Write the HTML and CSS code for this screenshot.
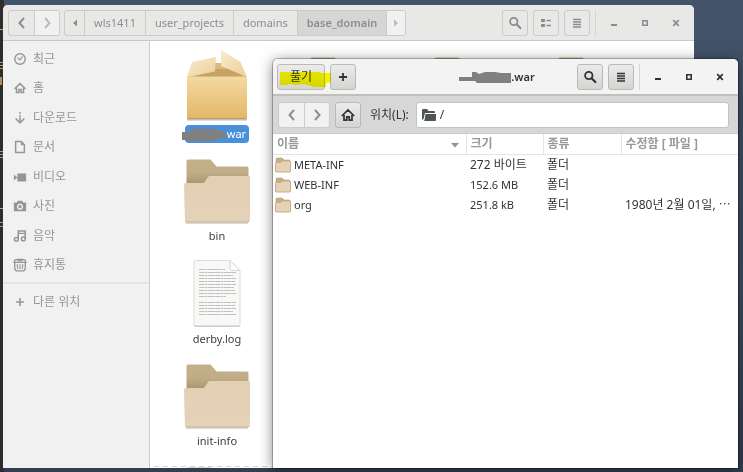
FILE: index.html
```html
<!DOCTYPE html>
<html lang="ko">
  <head>
    <meta charset="UTF-8" />
    <meta name="viewport" content="width=device-width, initial-scale=1.0" />
    <title>base_domain</title>
    <link rel="stylesheet" href="styles.css">
  </head>
  <body>
    <!-- shared icons -->
    <svg class="defs" width="0" height="0">
      <defs>
        <linearGradient id="g-back" x1="0" y1="0" x2="0" y2="1">
          <stop offset="0" stop-color="#c4b18b" />
          <stop offset="0.35" stop-color="#c0ad87" />
          <stop offset="0.65" stop-color="#a8946f" />
        </linearGradient>
        <linearGradient id="g-front" x1="0" y1="0" x2="0" y2="1">
          <stop offset="0" stop-color="#e3cfb3" />
          <stop offset="1" stop-color="#e4d2b9" />
        </linearGradient>
        <linearGradient id="g-box" x1="0" y1="0" x2="0" y2="1">
          <stop offset="0" stop-color="#f3d9a2" />
          <stop offset="1" stop-color="#e3b868" />
        </linearGradient>
        <linearGradient id="g-flap" x1="0" y1="0" x2="1" y2="1">
          <stop offset="0" stop-color="#f8ead0" />
          <stop offset="1" stop-color="#edcf98" />
        </linearGradient>
      </defs>
      <symbol id="folder" viewBox="0 0 66 65">
        <path d="M2 63h62v2H2z" fill="#000" opacity="0.15" />
        <path d="M2.500 2a1.500 1.500 0 0 1 1.500-1.500h22.500l6 7H63a1.500 1.500 0 0 1 1.500 1.500v30h-62z" fill="url(#g-back)" />
        <path d="M.5 25.500a1.500 1.500 0 0 1 1.500-1.500h18l5-7h39.500a1.500 1.500 0 0 1 1.500 1.500l-.5 43a2 2 0 0 1-2 2H3a2 2 0 0 1-2-2z" fill="#c9b18d" />
        <path d="M.5 25.500a1.500 1.500 0 0 1 1.500-1.500h18l5-7h39.500a1.500 1.500 0 0 1 1.500 1.500l-.5 42a2 2 0 0 1-2 2H3a2 2 0 0 1-2-2z" fill="url(#g-front)" />
      </symbol>
      <symbol id="folder-small" viewBox="0 0 16 16">
        <path d="M1 2q0-1 1-1h5l2 2h5q1 0 1 1v6H1z" fill="#c3ae88" stroke="#b8a27b" stroke-width=".6" />
        <path d="M.5 6.500q0-1 1-1h4l2-1.500h7q1 0 1 1V14q0 1-1 1h-13q-1 0-1-1z" fill="#e5d2b7" stroke="#c6ad88" />
      </symbol>
      <symbol id="prev" viewBox="0 0 16 16"><path d="M10 3 5.500 8l4.500 5" fill="none" stroke="currentColor" stroke-width="2" /></symbol>
      <symbol id="next" viewBox="0 0 16 16"><path d="M6 3l4.500 5L6 13" fill="none" stroke="currentColor" stroke-width="2" /></symbol>
      <symbol id="search" viewBox="0 0 16 16">
        <circle cx="6.800" cy="6.500" r="3.700" fill="none" stroke="currentColor" stroke-width="1.800" />
        <path d="M9.600 9.300l3.700 3.700" stroke="currentColor" stroke-width="2.200" stroke-linecap="round" />
      </symbol>
      <symbol id="menu" viewBox="0 0 16 16"><path d="M4 4.500h8M4 7h8M4 9.500h8M4 12h8" stroke="currentColor" stroke-width="1.300" /></symbol>
      <symbol id="list" viewBox="0 0 16 16"><path d="M3 4h4v3H3zM3 9h4v3H3zM8.500 4.700h4.500v1.600H8.500zM8.500 9.700h4.500v1.600H8.500z" fill="currentColor" /></symbol>
      <symbol id="minimize" viewBox="0 0 16 16"><path d="M5 9h6v2H5z" fill="currentColor" /></symbol>
      <symbol id="maximize" viewBox="0 0 16 16"><path d="M5.800 5.800h4.400v4.400H5.800z" fill="none" stroke="currentColor" stroke-width="1.600" /></symbol>
      <symbol id="close" viewBox="0 0 16 16"><path d="M5.200 5.200l5.600 5.600M10.800 5.200l-5.600 5.600" stroke="currentColor" stroke-width="1.800" /></symbol>
      <symbol id="home" viewBox="0 0 16 16">
        <path d="M1.800 9L8 3l6.200 6M4 8v5.200h2.800V9.800h2.400v3.400H12V8" fill="none" stroke="currentColor" stroke-width="1.700" />
      </symbol>
    </svg>

    <div class="terminal-edge"></div>

    <div class="window files">
      <header class="titlebar">
        <div class="group">
          <button type="button" aria-label="뒤로"><svg><use href="#prev" /></svg></button>
          <button type="button" class="dim" aria-label="앞으로"><svg><use href="#next" /></svg></button>
        </div>
        <nav class="group path">
          <button type="button" class="arrow" aria-label="왼쪽"><svg viewBox="0 0 16 16"><path d="M10 4.500v7L6 8z" fill="currentColor" /></svg></button>
          <button type="button">wls1411</button>
          <button type="button">user_projects</button>
          <button type="button">domains</button>
          <button type="button" class="active">base_domain</button>
          <button type="button" class="arrow dim" aria-label="오른쪽"><svg viewBox="0 0 16 16"><path d="M6 4.500v7l4-3.500z" fill="currentColor" /></svg></button>
        </nav>
        <div class="controls">
          <button type="button" aria-label="검색"><svg><use href="#search" /></svg></button>
          <button type="button" aria-label="보기"><svg><use href="#list" /></svg></button>
          <button type="button" aria-label="메뉴"><svg><use href="#menu" /></svg></button>
          <span class="separator"></span>
          <button type="button" class="flat" aria-label="최소화"><svg><use href="#minimize" /></svg></button>
          <button type="button" class="flat" aria-label="최대화"><svg><use href="#maximize" /></svg></button>
          <button type="button" class="flat" aria-label="닫기"><svg><use href="#close" /></svg></button>
        </div>
      </header>

      <div class="content">
        <aside class="sidebar">
          <div class="places">
            <a href="#"><svg viewBox="0 0 16 16"><circle cx="8" cy="8" r="6" fill="none" stroke="currentColor" stroke-width="1.600" /><path d="M5 6.500l3 2.500 3-4" fill="none" stroke="currentColor" stroke-width="1.200" /></svg>최근</a>
            <a href="#"><svg><use href="#home" /></svg>홈</a>
            <a href="#"><svg viewBox="0 0 16 16"><path d="M8 1v2M8 4.500v2M8 7v5" stroke="currentColor" stroke-width="1.800" /><path d="M3 8.500l5 5 5-5" fill="none" stroke="currentColor" stroke-width="1.800" /></svg>다운로드</a>
            <a href="#"><svg viewBox="0 0 16 16"><path d="M3 1.800h6.500L13 5.500v8.700H3z" fill="none" stroke="currentColor" stroke-width="1.700" /><path d="M9 2v4h4z" fill="currentColor" /></svg>문서</a>
            <a href="#"><svg viewBox="0 0 16 16"><path d="M5 4h10v9H5zM1 5l4 3.500L1 12z" fill="currentColor" /></svg>비디오</a>
            <a href="#"><svg viewBox="0 0 16 16"><path fill-rule="evenodd" d="M1 4h3.500l1-2h5l1 2H15v10H1zM8 5.200a3.600 3.600 0 1 0 .01 0z" fill="currentColor" /><circle cx="8" cy="8.800" r="1.900" fill="currentColor" /></svg>사진</a>
            <a href="#"><svg viewBox="0 0 16 16"><path d="M6 11.500V2.200h8v9M6 5h8" fill="none" stroke="currentColor" stroke-width="1.700" /><circle cx="3.800" cy="11.800" r="2.200" fill="none" stroke="currentColor" stroke-width="1.700" /><circle cx="11.800" cy="11.300" r="2.200" fill="none" stroke="currentColor" stroke-width="1.700" /></svg>음악</a>
            <a href="#"><svg viewBox="0 0 16 16"><path d="M1.500 4.500q0-3 4-3h5q4 0 4 3M.5 5h15M2 5v6q0 3.700 3.500 3.700h5q3.500 0 3.500-3.700V5" fill="none" stroke="currentColor" stroke-width="1.500" /><path d="M5 7q-.5 3 .8 5.500M8 7v5.500M11 7q.5 3-.8 5.500M5 3h6" fill="none" stroke="currentColor" stroke-width="1.300" /></svg>휴지통</a>
          </div>
          <div class="places other">
            <a href="#"><svg viewBox="0 0 16 16"><path d="M8 3.500v9M3.500 8h9" stroke="currentColor" stroke-width="1.800" /></svg>다른 위치</a>
          </div>
        </aside>

        <main class="icon-view">
          <div class="file">
            <svg class="pic package" viewBox="0 0 62 73">
              <path d="M1 69h60v2.500H1z" fill="#000" opacity="0.25" />
              <path d="M1 28L28 14h12l20 14z" fill="#dab978" />
              <path d="M27 20h16l17 8H8z" fill="#b99557" opacity="0.6" />
              <path d="M1 27.500h60V67q0 3-3 3H4q-3 0-3-3z" fill="#c59a50" />
              <path d="M1 27.500h60V66q0 3-3 3H4q-3 0-3-3z" fill="url(#g-box)" />
              <path d="M6 13l24-5-1 14.500L1 28z" fill="url(#g-flap)" />
              <path d="M35 1l19.500 12L61 28 35 17z" fill="url(#g-flap)" />
            </svg>
            <span class="name selected"><span class="hidden-name"><svg viewBox="0 0 44 15"><path d="M0 5h5l6-3h20q7 0 9 3h4v6h-6q-3 3-13 3H8l-5-1H0z" fill="#808080" /></svg></span>.war</span>
          </div>
          <div class="file"><svg class="pic"><use href="#folder" /></svg></div>
          <div class="file"><svg class="pic"><use href="#folder" /></svg></div>
          <div class="file"><svg class="pic"><use href="#folder" /></svg></div>

          <div class="file first"><svg class="pic"><use href="#folder" /></svg><span class="name">bin</span></div>
          <div class="file first">
            <svg class="pic document" viewBox="0 0 48 67">
              <path d="M1 2q0-1.500 1.500-1.500H37L47 10.500V65q0 1.500-1.500 1.500h-43Q1 66.500 1 65z" fill="#f8f8f7" stroke="#dcdcda" />
              <path d="M37 .5V9q0 1.500 1.500 1.500H47z" fill="#fff" stroke="#d6d6d4" />
              <path d="M6 9.500h26M6 12.500h37M6 15.500h34M6 18.500h37M6 21.500h36M6 24.500h37M6 27.500h35M6 30.500h36M6 33.500h37M6 36.500h27M6 42.500h37M6 45.500h36M6 48.500h37M6 51.500h34M6 54.500h37" stroke="#c0c0c0" stroke-dasharray="5 .4 3 .4 7 .4" />
              <path d="M1.500 66h45" stroke="#c0c0be" />
            </svg>
            <span class="name">derby.log</span>
          </div>
          <div class="file first"><svg class="pic"><use href="#folder" /></svg><span class="name">init-info</span></div>
          <div class="file first"><svg class="pic"><use href="#folder" /></svg></div>
        </main>
      </div>
    </div>

    <div class="window archive">
      <header class="titlebar">
        <div class="actions">
          <button type="button" class="extract">풀기<svg class="marker" viewBox="0 0 51 17"><path d="M0 1h40l1 1h10v9l-5 1v4H35l-5-1-6-2-8 1-6-1-3 1H0z" fill="#ffff00" /></svg></button>
          <button type="button" aria-label="추가"><svg viewBox="0 0 16 16"><path d="M8 4v8M4 8h8" stroke="currentColor" stroke-width="1.800" /></svg></button>
        </div>
        <div class="title"><span class="hidden-name"><svg viewBox="0 0 54 12"><path d="M0 6h13V1h4l3 2 6-2h10l6 1h10v10H18l-2-2H0z" fill="#808080" /></svg></span>.war</div>
        <div class="controls">
          <button type="button" aria-label="검색"><svg><use href="#search" /></svg></button>
          <button type="button" aria-label="메뉴"><svg><use href="#menu" /></svg></button>
          <span class="separator"></span>
          <button type="button" class="flat" aria-label="최소화"><svg><use href="#minimize" /></svg></button>
          <button type="button" class="flat" aria-label="최대화"><svg><use href="#maximize" /></svg></button>
          <button type="button" class="flat" aria-label="닫기"><svg><use href="#close" /></svg></button>
        </div>
      </header>

      <div class="toolbar">
        <div class="group">
          <button type="button" aria-label="뒤로"><svg><use href="#prev" /></svg></button>
          <button type="button" aria-label="앞으로"><svg><use href="#next" /></svg></button>
        </div>
        <button type="button" class="home" aria-label="홈"><svg><use href="#home" /></svg></button>
        <label for="location">위치(L):</label>
        <div class="entry">
          <svg viewBox="0 0 16 16"><path d="M1 3q0-1 1-1h4l1.500 2H13q1 0 1 1v1H4L2.500 12 1 13z" fill="#4d5558" /><path d="M4.500 7H15v6q0 1-1 1H2.500q1 0 1-1z" fill="#4d5558" /></svg>
          <input type="text" id="location" value="/" />
        </div>
      </div>

      <table>
        <thead>
          <tr>
            <th class="col-name">이름<svg viewBox="0 0 10 6"><path d="M1 1h8L5 5.500z" fill="#8f9394" /></svg></th>
            <th class="col-size">크기</th>
            <th class="col-kind">종류</th>
            <th class="col-date">수정함 [ 파일 ]</th>
          </tr>
        </thead>
        <tbody>
          <tr>
            <td class="latin"><svg><use href="#folder-small" /></svg>META-INF</td>
            <td>272 바이트</td>
            <td>폴더</td>
            <td></td>
          </tr>
          <tr>
            <td class="latin"><svg><use href="#folder-small" /></svg>WEB-INF</td>
            <td class="latin">152.6 MB</td>
            <td>폴더</td>
            <td></td>
          </tr>
          <tr>
            <td class="latin"><svg><use href="#folder-small" /></svg>org</td>
            <td class="latin">251.8 kB</td>
            <td>폴더</td>
            <td>1980년 2월 01일, ⋯</td>
          </tr>
        </tbody>
      </table>
    </div>
  </body>
</html>
```

FILE: styles.css
```css
/* Desktop */
body {
  margin: 0;
  height: 100vh;
  position: relative;
  overflow: hidden;
  background: linear-gradient(#43546a, #3d4e63 60%, #333f50);
  font-family: "Noto Sans", "Noto Sans CJK KR", sans-serif;
  font-size: 12px;
  line-height: 18px;
  color: #2e3436;
}

.defs {
  position: absolute;
}

svg {
  width: 16px;
  height: 16px;
  flex: none;
}

.terminal-edge {
  position: absolute;
  left: 0;
  top: 0;
  bottom: 0;
  width: 4px;
  background:
    linear-gradient(#b8a47c, #b8a47c) 0 29px / 3px 1px no-repeat,
    repeating-linear-gradient(#a6987a 0 1px, #2d2d2d 1px 3px) 0 62px / 3px 8px no-repeat,
    linear-gradient(#b08a58, #b08a58) 0 77px / 2px 8px no-repeat,
    repeating-linear-gradient(#a6987a 0 1px, #2d2d2d 1px 3px) 0 151px / 3px 8px no-repeat,
    linear-gradient(#b8a47c, #b8a47c) 0 208px / 3px 1px no-repeat,
    repeating-linear-gradient(#a6987a 0 1px, #2d2d2d 1px 4px) 0 222px / 3px 8px no-repeat,
    #2d2d2d;
}

/* Windows */
.window {
  position: absolute;
  bottom: 4px;
  display: flex;
  flex-direction: column;
  border-radius: 5px 5px 0 0;
  overflow: hidden;
  background-color: #fff;
}

.files {
  left: 3px;
  right: 49px;
  top: 5px;
  color: #8b8e8f;
}

.archive {
  left: 273px;
  right: 5px;
  top: 59px;
  box-shadow: 0 0 0 1px rgba(0, 0, 0, 0.25), 0 2px 14px rgba(0, 0, 0, 0.5);
}

.titlebar {
  display: flex;
  align-items: center;
  gap: 5px;
  height: 35px;
  padding: 0 5px;
  border-bottom: 1px solid #c9c9c7;
  background-color: #e8e8e7;
}

.titlebar .controls,
.titlebar .actions {
  display: flex;
  gap: 5px;
}

.files .titlebar {
  gap: 4px;
}

.files .controls {
  margin-left: auto;
}

.separator {
  width: 1px;
  background-color: #d5d5d3;
}

/* Buttons */
button {
  display: flex;
  justify-content: center;
  align-items: center;
  box-sizing: border-box;
  width: 26px;
  height: 26px;
  padding: 0;
  border: 1px solid #cbcbc9;
  border-radius: 3px;
  background: none;
  color: inherit;
  font: inherit;
}

button.flat {
  border-color: transparent;
}

.group {
  display: flex;
  box-sizing: border-box;
  height: 26px;
  border: 1px solid #cbcbc9;
  border-radius: 3px;
  overflow: hidden;
}

.group button {
  width: 25px;
  height: 24px;
  border: 0;
  border-radius: 0;
}

.group button + button {
  border-left: 1px solid #cbcbc9;
}

.group .dim {
  background-color: #f1f1f1;
  color: #b9bbbb;
}

.path button {
  width: auto;
  padding: 0 9px;
  font-size: 11px;
}

.path .arrow {
  width: 19px;
  padding: 0;
}

.path .active {
  background-color: #d6d6d5;
  font-weight: 600;
}

/* File manager */
.content {
  display: flex;
  flex: 1;
  min-height: 0;
}

.sidebar {
  box-sizing: border-box;
  width: 147px;
  padding-top: 3px;
  border-right: 1px solid #cbcbc9;
  background-color: #f1f1f1;
}

.places {
  display: grid;
  grid-template-rows: repeat(8, 1fr);
  height: 236px;
  padding-bottom: 2px;
}

.places a {
  display: flex;
  align-items: center;
  gap: 6px;
  padding-left: 10px;
  color: #939696;
  text-decoration: none;
}

.places svg {
  width: 14px;
  height: 14px;
}

.other {
  grid-template-rows: 1fr;
  height: 35px;
  border-top: 2px solid #e4e4e4;
}

.icon-view {
  display: grid;
  grid-template-columns: repeat(4, 124px);
  grid-template-rows: repeat(5, 1fr);
  flex: 1;
  height: 512px;
  padding: 8px 0 0 5px;
  background: repeating-linear-gradient(90deg, #fff 0 4px, #d3d3d1 4px 9px) 0 425px / 100% 1px no-repeat;
}

.file {
  display: flex;
  flex-direction: column;
  align-items: center;
  gap: 3px;
  color: #3c4143;
  font-size: 11px;
}

.file.first {
  grid-column: 1;
}

.pic {
  width: 66px;
  height: 65px;
  margin-top: 8px;
}

.pic.package {
  width: 62px;
  height: 73px;
  margin-top: 0;
}

.pic.document {
  width: 48px;
  height: 67px;
  margin-top: 6px;
}

.name.selected {
  padding: 0 3px;
  border-radius: 4px;
  background-color: #4a90d9;
  color: #fff;
}

/* Blotted out part of a file name */
.hidden-name {
  display: inline-block;
  position: relative;
  width: 36px;
}

.hidden-name svg {
  position: absolute;
  right: -2px;
  bottom: -4px;
  width: 44px;
  height: 15px;
}

.title .hidden-name svg {
  bottom: -2px;
  width: 54px;
  height: 12px;
}

/* Archive manager */
.archive .titlebar {
  display: grid;
  grid-template-columns: 1fr auto 1fr;
  padding: 0 5px 0 4px;
  border-bottom: 2px solid #bfc0ba;
  background-color: #f3f3f3;
}

.archive .controls {
  justify-content: flex-end;
}

.archive button:not(.flat) {
  border-color: #b9b9b5;
  background: linear-gradient(#ebebea, #d4d4d2);
}

.archive .extract {
  position: relative;
  width: 48px;
}

.marker {
  position: absolute;
  left: 2px;
  top: 6px;
  width: 51px;
  height: 17px;
  mix-blend-mode: multiply;
}

.title {
  font-size: 11px;
  font-weight: 600;
}

.toolbar {
  display: flex;
  align-items: center;
  gap: 5px;
  height: 37px;
  padding: 0 9px 0 5px;
  border-bottom: 1px solid #cdcdca;
  background-color: #d6d7d6;
}

.archive .group button:not(.flat) {
  border-color: #cbcbc9;
  background: #f1f1f1;
  color: #8b8e8f;
}

.toolbar label {
  padding: 0 2px 0 4px;
}

.entry {
  display: flex;
  flex: 1;
  align-items: center;
  box-sizing: border-box;
  height: 26px;
  padding: 0 4px;
  border: 1px solid #c2c3c0;
  border-radius: 3px;
  background-color: #fff;
}

.entry input {
  flex: 1;
  min-width: 0;
  padding: 0 3px;
  border: 0;
  outline: 0;
  background: none;
  color: inherit;
  font: inherit;
}

table {
  width: 100%;
  table-layout: fixed;
  border-collapse: collapse;
}

th,
td {
  height: 20px;
  padding: 0 0 0 4px;
  text-align: left;
  white-space: nowrap;
  line-height: 18px;
}

th {
  box-sizing: border-box;
  border-bottom: 1px solid #e4e4e4;
  color: #969a9a;
}

th + th {
  border-left: 1px solid #e4e4e4;
}

th svg {
  float: right;
  width: 10px;
  height: 6px;
  margin: 7px 6px 0 0;
}

.col-name {
  width: 193px;
}

.col-size {
  width: 77px;
}

.col-kind {
  width: 78px;
}

td svg {
  margin: -2px 3px 0 -2px;
  vertical-align: middle;
}

.latin {
  font-size: 11px;
}
```
